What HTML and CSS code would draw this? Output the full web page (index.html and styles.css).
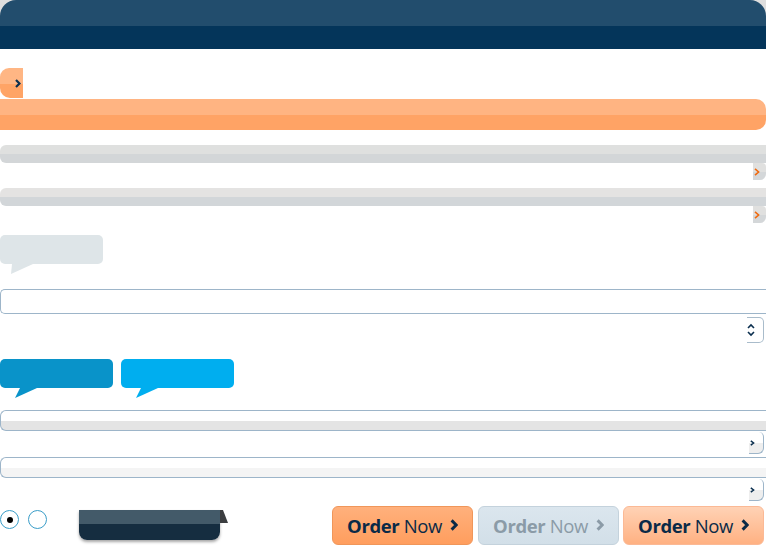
FILE: index.html
```html
<!DOCTYPE html>
<html lang="en">
<head>
<meta charset="utf-8">
<title>UI Kit</title>
<link rel="stylesheet" href="styles.css">
</head>
<body>
<div class="page">
  <header class="topbar"></header>

  <div class="tab-orange">
    <svg width="6" height="9" viewBox="0 0 6 9"><path d="M1 1 L4.5 4.5 L1 8" fill="none" stroke="#0b2f4f" stroke-width="2.2"/></svg>
  </div>
  <div class="bar-orange"></div>

  <div class="bar-gray"></div>
  <div class="row-end">
    <div class="tab-gray"><svg width="6" height="8" viewBox="0 0 6 8"><path d="M1 0.8 L4.6 4 L1 7.2" fill="none" stroke="#f06a10" stroke-width="1.6"/></svg></div>
  </div>
  <div class="bar-gray second"></div>
  <div class="row-end">
    <div class="tab-gray"><svg width="6" height="8" viewBox="0 0 6 8"><path d="M1 0.8 L4.6 4 L1 7.2" fill="none" stroke="#f06a10" stroke-width="1.6"/></svg></div>
  </div>

  <div class="bubble bubble-gray"></div>

  <div class="field"></div>
  <div class="row-end">
    <div class="select-btn">
      <svg width="8" height="14" viewBox="0 0 8 14"><path d="M1 5 L4 2 L7 5 M1 9 L4 12 L7 9" fill="none" stroke="#0b2f4f" stroke-width="1.6"/></svg>
    </div>
  </div>

  <div class="bubble-row">
    <div class="bubble bubble-blue-dark"></div>
    <div class="bubble bubble-blue"></div>
  </div>

  <div class="fbar fbar-a"></div>
  <div class="row-end">
    <div class="ftab"><svg width="5" height="6" viewBox="0 0 5 6"><path d="M0.8 0.8 L3.6 3 L0.8 5.2" fill="none" stroke="#0b2f4f" stroke-width="1.5"/></svg></div>
  </div>
  <div class="fbar fbar-b"></div>
  <div class="row-end">
    <div class="ftab"><svg width="5" height="6" viewBox="0 0 5 6"><path d="M0.8 0.8 L3.6 3 L0.8 5.2" fill="none" stroke="#0b2f4f" stroke-width="1.5"/></svg></div>
  </div>

  <div class="bottom-row">
    <span class="radio checked"></span>
    <span class="radio"></span>
    <div class="ribbon"></div>
    <div class="buttons">
      <button class="order order-primary"><b>Order</b>&nbsp;Now<svg class="chev" width="8" height="12" viewBox="0 0 8 12"><path d="M1.6 1.4 L6.2 6 L1.6 10.6" fill="none" stroke="currentColor" stroke-width="3"/></svg></button>
      <button class="order order-disabled"><b>Order</b>&nbsp;Now<svg class="chev" width="8" height="12" viewBox="0 0 8 12"><path d="M1.6 1.4 L6.2 6 L1.6 10.6" fill="none" stroke="currentColor" stroke-width="3"/></svg></button>
      <button class="order order-light"><b>Order</b>&nbsp;Now<svg class="chev" width="8" height="12" viewBox="0 0 8 12"><path d="M1.6 1.4 L6.2 6 L1.6 10.6" fill="none" stroke="currentColor" stroke-width="3"/></svg></button>
    </div>
  </div>
</div>
</body>
</html>
```

FILE: styles.css
```css
* { box-sizing: border-box; }
html, body { margin: 0; padding: 0; background: #fff; overflow: hidden; }
body { font-family: "Open Sans", "Liberation Sans", sans-serif; }
.page { width: 766px; display: flex; flex-direction: column; background: linear-gradient(#dedede 0 16px, #fff 16px); }

.topbar {
  height: 49px;
  border-radius: 16px 16px 0 0;
  background: linear-gradient(#224d6d 0 26px, #04355a 26px);
}

.tab-orange {
  margin-top: 19px;
  width: 23px;
  height: 30px;
  border-radius: 9px 0 0 10px;
  background: linear-gradient(#ffb684 0 16px, #ffa466 16px);
  display: flex;
  align-items: center;
  padding: 0 0 0 15px;
}
.bar-orange {
  margin-top: 1px;
  height: 31px;
  border-radius: 0 10px 10px 0;
  background: linear-gradient(#ffb482 0 16px, #ffa365 16px);
}

.bar-gray {
  margin-top: 15px;
  height: 18px;
  border-radius: 6px 0 0 6px;
  background: linear-gradient(#dfe0df 0 9px, #d3d6d8 9px);
}
.bar-gray.second { margin-top: 8px; background: linear-gradient(#e4e3e2 0 9px, #d2d6d9 9px); }

.row-end { display: flex; justify-content: flex-end; }

.tab-gray {
  width: 13px;
  height: 17px;
  border-radius: 0 4px 6px 0;
  background: linear-gradient(#e0e0df 0 9px, #d4d7d9 9px);
  display: flex;
  align-items: center;
  padding-left: 1px;
}

.bubble { position: relative; width: 103px; height: 29px; border-radius: 5px; }
.bubble::after { content: ""; position: absolute; top: 29px; width: 22px; height: 10px; }
.bubble-gray { margin-top: 12px; background: #dee5e8; }
.bubble-gray::after { left: 11px; background: #dee5e8; clip-path: polygon(1px 0, 22px 0, 0 10px); }

.field {
  margin-top: 25px;
  height: 25px;
  border: 1px solid #9db5c9;
  border-right: none;
  border-radius: 5px 0 0 5px;
  background: #fff;
}
.select-btn {
  margin-top: 3px;
  margin-right: 2px;
  width: 17px;
  height: 26px;
  border: 1px solid #a9bccb;
  border-left: none;
  border-radius: 0 5px 5px 0;
  display: flex;
  align-items: center;
  padding-left: 0;
}

.bubble-row { display: flex; gap: 8px; margin-top: 16px; }
.bubble-row .bubble { width: 113px; }
.bubble-blue-dark { background: #0993c9; }
.bubble-blue { background: #00aeef; }
.bubble-blue-dark::after, .bubble-blue::after { left: 15px; clip-path: polygon(5px 0, 22px 0, 0 10px); }
.bubble-blue-dark::after { background: #0993c9; }
.bubble-blue::after { background: #00aeef; }

.fbar {
  margin-top: 22px;
  height: 21px;
  border: 1px solid #9db5c9;
  border-right: none;
  border-radius: 6px 0 0 6px;
}
.fbar-a { background: linear-gradient(#fff 0 10px, #e4e4e4 10px); }
.fbar-b { margin-top: 3px; background: linear-gradient(#fff 0 10px, #f4f4f4 10px); }

.ftab {
  margin-right: 2px;
  margin-top: 1px;
  width: 15px;
  height: 22px;
  border: 1px solid #9db5c9;
  border-left: none;
  border-top: none;
  border-radius: 0 5px 6px 0;
  background: linear-gradient(#fff 0 11px, #eeeeee 11px);
  display: flex;
  align-items: center;
  padding-left: 1px;
}

.bottom-row {
  margin-top: 5px;
  display: flex;
  align-items: flex-start;
  height: 44px;
}
.radio {
  margin-top: 4px;
  width: 19px;
  height: 19px;
  border: 1.5px solid #3a9dc8;
  border-radius: 50%;
  display: flex;
  align-items: center;
  justify-content: center;
}
.radio + .radio { margin-left: 9px; }
.radio.checked::after { content: ""; width: 6px; height: 6px; border-radius: 50%; background: #000; }

.ribbon {
  position: relative;
  margin-top: 4px;
  margin-left: 32px;
  width: 141px;
  height: 30px;
  border-radius: 0 0 8px 8px;
  background: linear-gradient(#435a69 0 14px, #152d40 14px);
  box-shadow: 0 2px 3px rgba(0,0,0,0.35);
}
.ribbon::after {
  content: "";
  position: absolute;
  left: 141px;
  top: 0;
  width: 8px;
  height: 13px;
  background: #3b3d40;
  clip-path: polygon(0 0, 3px 0, 8px 13px, 0 13px);
}

.buttons { margin-left: auto; margin-right: 2px; display: flex; gap: 5px; }
.buttons .order:last-child { margin-left: -1px; }
.order {
  width: 141px;
  height: 39px;
  border-radius: 6px;
  font-family: "Open Sans", "Liberation Sans", sans-serif;
  font-size: 18.5px;
  letter-spacing: -0.4px;
  display: flex;
  align-items: center;
  justify-content: center;
  padding: 0 0 1px;
  cursor: pointer;
}
.order b { font-weight: 700; }
.order .chev { margin-left: 8px; }
.order-primary {
  color: #0a2a47;
  border: 1px solid #f0965a;
  background: linear-gradient(#ffb07c, #ff9e5e);
}
.order-disabled {
  color: #8b9ba7;
  border: 1px solid #c4d2dc;
  background: linear-gradient(#dbe6ee, #d2dfe8);
}
.order-light {
  color: #0a2a47;
  border: 1px solid #fbb995;
  background: linear-gradient(#ffd2b5, #ffb182);
}
```
